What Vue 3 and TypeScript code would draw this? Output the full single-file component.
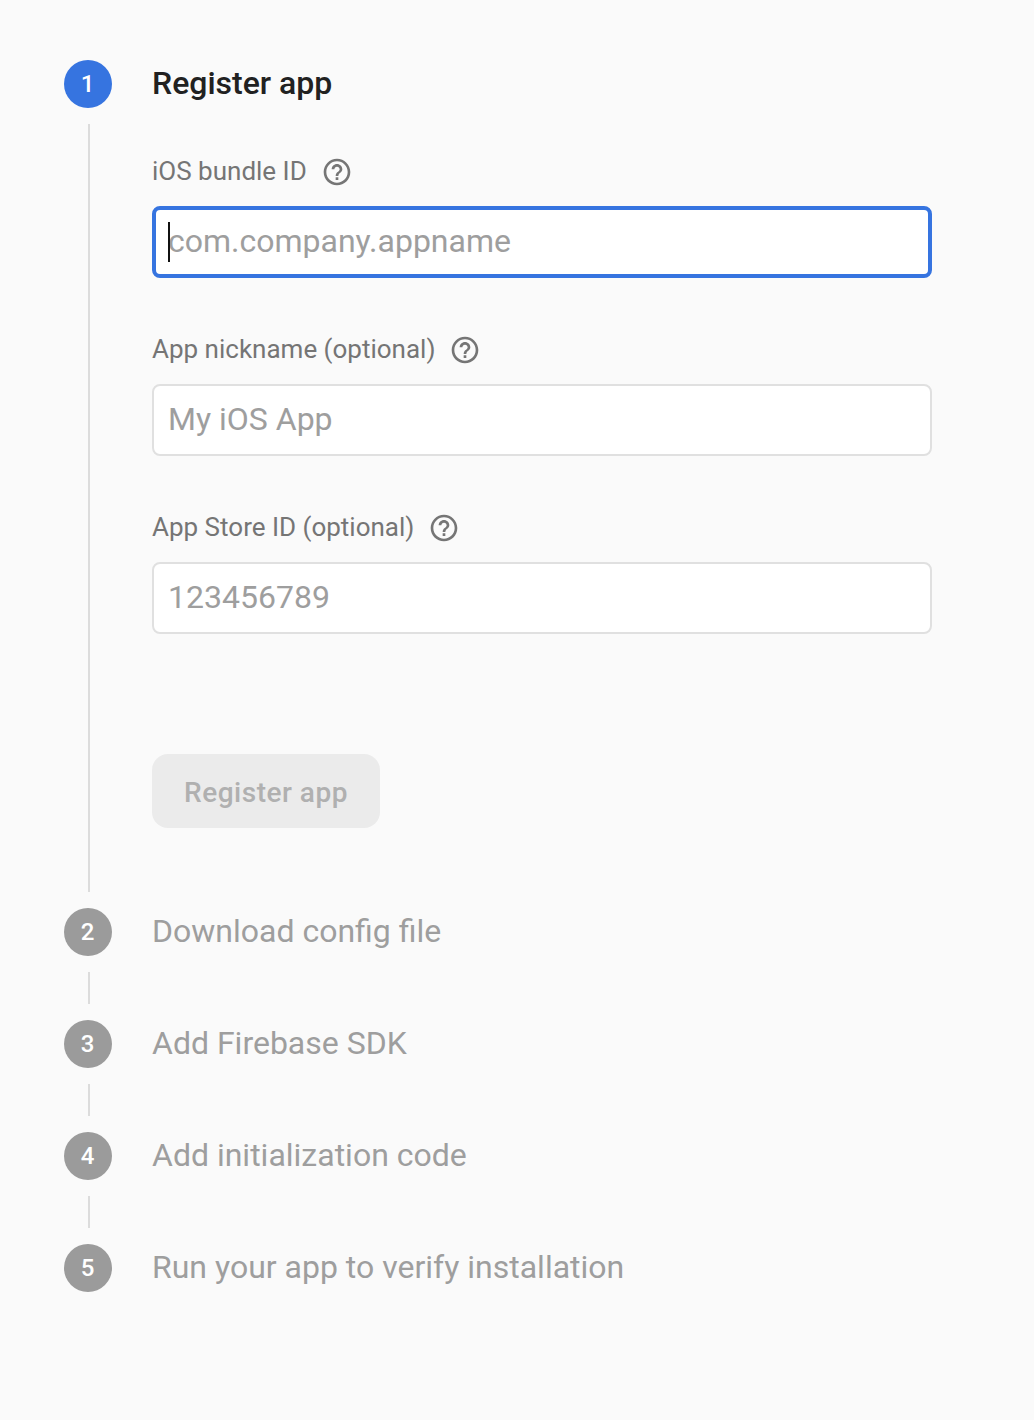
<script setup lang="ts">
import { ref } from 'vue'

interface Field {
  id: string
  label: string
  placeholder: string
  focused: boolean
}

const fields: Field[] = [
  { id: 'bundle-id', label: 'iOS bundle ID', placeholder: 'com.company.appname', focused: true },
  { id: 'nickname', label: 'App nickname (optional)', placeholder: 'My iOS App', focused: false },
  { id: 'store-id', label: 'App Store ID (optional)', placeholder: '123456789', focused: false },
]

const steps: string[] = [
  'Register app',
  'Download config file',
  'Add Firebase SDK',
  'Add initialization code',
  'Run your app to verify installation',
]

const activeStep = ref(0)
</script>

<template>
  <main class="page">
    <ol class="stepper">
      <li v-for="(title, i) in steps" :key="title" class="step" :class="{ active: i === activeStep }">
        <div class="rail">
          <span class="badge">{{ i + 1 }}</span>
          <span v-if="i < steps.length - 1" class="connector"></span>
        </div>
        <div class="content">
          <h2 class="title">{{ title }}</h2>
          <form v-if="i === activeStep" class="form" @submit.prevent>
            <div v-for="field in fields" :key="field.id" class="field">
              <div class="label-row">
                <label :for="field.id">{{ field.label }}</label>
                <svg class="help" viewBox="0 0 24 24" aria-hidden="true">
                  <path
                    d="M11 18h2v-2h-2v2zm1-16C6.48 2 2 6.48 2 12s4.48 10 10 10 10-4.48 10-10S17.52 2 12 2zm0 18c-4.41 0-8-3.59-8-8s3.59-8 8-8 8 3.59 8 8-3.59 8-8 8zm0-14c-2.21 0-4 1.79-4 4h2c0-1.1.9-2 2-2s2 .9 2 2c0 2-3 1.75-3 5h2c0-2.25 3-2.5 3-5 0-2.21-1.79-4-4-4z"
                  />
                </svg>
              </div>
              <div class="control" :class="{ focused: field.focused }">
                <input :id="field.id" type="text" :placeholder="field.placeholder" />
                <span v-if="field.focused" class="caret"></span>
              </div>
            </div>
            <button class="submit" type="submit" disabled>Register app</button>
          </form>
        </div>
      </li>
    </ol>
  </main>
</template>

<style>
body {
  margin: 0;
  background: #fafafa;
}
</style>

<style scoped>
.page {
  box-sizing: border-box;
  min-height: 1420px;
  padding: 60px 102px 0 64px;
  background: #fafafa;
  font-family: Roboto, 'Liberation Sans', sans-serif;
}

.stepper {
  margin: 0;
  padding: 0;
  list-style: none;
}

.step {
  display: flex;
  gap: 40px;
  min-height: 112px;
}

.step.active {
  min-height: 848px;
}

.rail {
  display: flex;
  flex-direction: column;
  width: 48px;
}

.badge {
  display: flex;
  align-items: center;
  justify-content: center;
  box-sizing: border-box;
  height: 48px;
  padding-right: 1px;
  border-radius: 50%;
  background: #9b9b9b;
  color: #fff;
  font-size: 24px;
  font-weight: 500;
  line-height: 48px;
}

.active .badge {
  background: #3674e0;
}

.connector {
  flex: 1;
  width: 2px;
  margin: 16px 0 16px 24px;
  background: #dcdcdc;
}

.content {
  flex: 1;
}

.title {
  margin: 0;
  color: #9e9e9e;
  font-size: 32px;
  font-weight: 400;
  line-height: 46px;
}

.active .title {
  color: #212121;
  font-weight: 500;
}

.form {
  padding-top: 46px;
}

.field {
  height: 178px;
}

.label-row {
  display: flex;
  align-items: center;
  gap: 14px;
  height: 40px;
  margin-bottom: 14px;
  color: #757575;
}

.label-row label {
  font-size: 26px;
  line-height: 38px;
  height: 40px;
}

.help {
  width: 32px;
  height: 32px;
  fill: #757575;
}

.control {
  position: relative;
  box-sizing: border-box;
  height: 72px;
  padding: 0 14px;
  border: 2px solid #e0e0e0;
  border-radius: 8px;
  background: #fff;
}

.control.focused {
  padding: 0 12px;
  border: 4px solid #3674e0;
}

.control input {
  display: block;
  width: 100%;
  height: 100%;
  padding: 0 0 2px;
  box-sizing: border-box;
  border: 0;
  outline: 0;
  background: transparent;
  font: 400 32px Roboto, 'Liberation Sans', sans-serif;
}

.control input::placeholder {
  color: #9e9e9e;
  opacity: 1;
}

.caret {
  position: absolute;
  top: 12px;
  left: 12px;
  width: 2px;
  height: 40px;
  background: #111;
}

.submit {
  display: block;
  width: 228px;
  height: 74px;
  margin-top: 68px;
  padding: 2px 0 0;
  border: 0;
  border-radius: 16px;
  background: #ebebeb;
  color: #b0b0b0;
  font: 500 28px Roboto, 'Liberation Sans', sans-serif;
  letter-spacing: 0.5px;
}
</style>
